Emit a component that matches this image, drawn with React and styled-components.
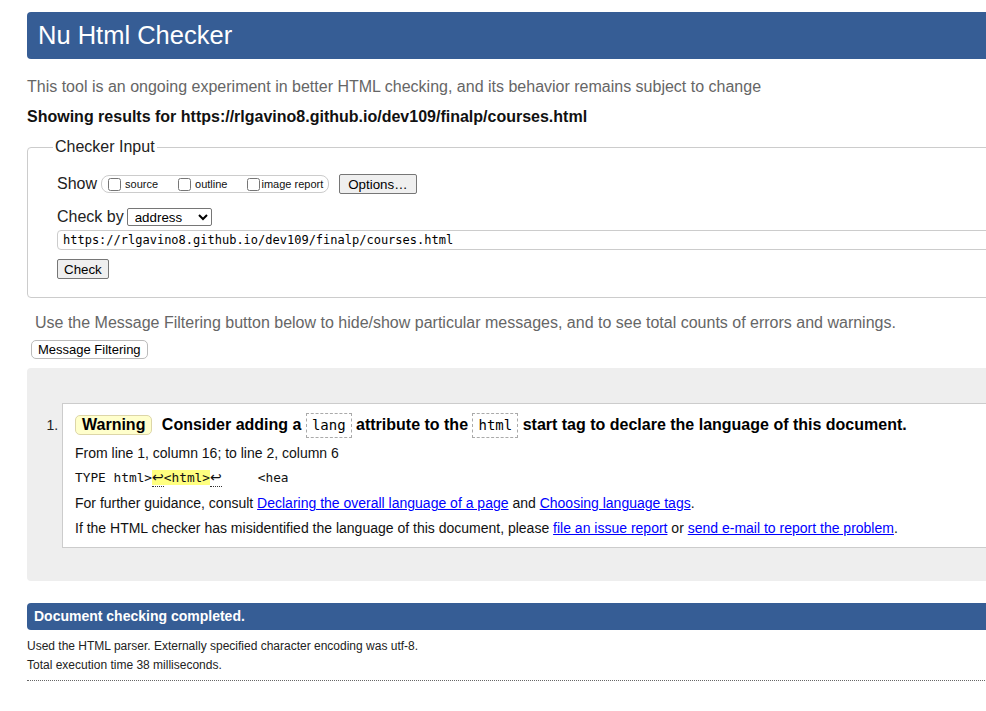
import React from 'react';
import styled, { createGlobalStyle } from 'styled-components';

const Global = createGlobalStyle`
  html, body { margin: 0; padding: 0; overflow: hidden; background: #fff; }
  body { font-family: "Liberation Sans", Arial, sans-serif; color: #000; }
`;

const Page = styled.div`
  width: 1060px;
  padding: 12px 0 0 27px;
  display: flex;
  flex-direction: column;
`;

const Header = styled.h1`
  margin: 0;
  height: 47px;
  background: #365d95;
  color: #fff;
  border-radius: 4px;
  font-size: 25.5px;
  font-weight: normal;
  line-height: 47px;
  padding-left: 11px;
`;

const Intro = styled.p`
  margin: ${p => p.$top}px 0 0 ${p => p.$left || 0}px;
  font-size: 16px;
  line-height: 20px;
  color: #666;
`;

const Results = styled.p`
  margin: 10px 0 0;
  font-size: 16px;
  line-height: 20px;
  font-weight: bold;
  color: #111;
`;

const Fieldset = styled.fieldset`
  margin: 10px 0 0;
  padding: 17px 0 18px 29px;
  border: 1px solid #ccc;
  border-radius: 4px;
  min-width: 0;
  display: flex;
  flex-direction: column;
`;

const Legend = styled.legend`
  font-size: 16px;
  line-height: 20px;
  padding: 0 2px;
  margin-left: -4px;
  color: #222;
`;

const Row = styled.div`
  display: flex;
  align-items: center;
  margin-top: ${p => p.$top || 0}px;
  font-size: 16px;
  color: #222;
`;

const OptGroup = styled.span`
  display: inline-flex;
  align-items: center;
  height: 16px;
  border: 1px solid #ccc;
  border-radius: 8px;
  padding: 0 5px 0 6px;
  margin: 0 10px 0 4px;
`;

const Opt = styled.label`
  display: inline-flex;
  align-items: center;
  font-size: 11px;
  margin-right: ${p => (p.$last ? 0 : 20)}px;
  color: #111;
`;

const Check = styled.input`
  width: 13px;
  height: 13px;
  margin: 0 ${p => p.$gap || 4}px 0 0;
`;

const Button = styled.button`
  font-family: "Liberation Sans", Arial, sans-serif;
  font-size: 13.33px;
  height: 20px;
  padding: 0 ${p => p.$pad || 6}px;
  background: #efefef;
  border: 1px solid #767676;
  border-radius: 2px;
  color: #000;
`;

const Select = styled.select`
  font-family: "Liberation Sans", Arial, sans-serif;
  font-size: 13.33px;
  width: 85px;
  height: 18px;
  margin-left: 3px;
  padding: 0 0 0 3px;
  border: 1px solid #767676;
  border-radius: 2px;
  background: #fff;
  color: #000;
`;

const UrlInput = styled.input`
  margin-top: 4px;
  height: 20px;
  box-sizing: border-box;
  border: 1px solid #ccc;
  border-radius: 4px;
  padding: 0 5px;
  font-family: "DejaVu Sans Mono", "Liberation Mono", monospace;
  font-size: 12px;
  color: #000;
  width: 1100px;
`;

const CheckRow = styled.div`
  margin-top: 9px;
`;

const FilterButton = styled.button`
  align-self: flex-start;
  margin: 7px 0 0 4px;
  height: 19px;
  padding: 0 6px;
  background: #fff;
  border: 1px solid #bbb;
  border-radius: 5px;
  font-family: "Liberation Sans", Arial, sans-serif;
  font-size: 13px;
  color: #000;
`;

const Results2 = styled.div`
  margin-top: 9px;
  background: #eee;
  border-radius: 4px;
  padding: 35px 0 33px;
`;

const List = styled.ol`
  margin: 0;
  padding: 0 0 0 35px;
  font-size: 14px;
  color: #222;
`;

const Item = styled.li`
  background: #fff;
  border: 1px solid #ccc;
  padding: 8px 0 9px 12px;
`;

const Heading = styled.p`
  margin: 0;
  font-size: 16px;
  line-height: 25px;
  font-weight: bold;
  color: #000;
`;

const Badge = styled.strong`
  display: inline-block;
  background: #ffffcc;
  border: 1px solid #ddd6a8;
  border-radius: 5px;
  padding: 0 6px;
  line-height: 18px;
  margin-right: 5px;
`;

const Code = styled.code`
  display: inline-block;
  border: 1px dashed #aaa;
  padding: 0 5px;
  line-height: 23px;
  font-family: "DejaVu Sans Mono", "Liberation Mono", monospace;
  font-size: 14px;
  font-weight: normal;
  vertical-align: middle;
`;

const Line = styled.p`
  margin: 5px 0 0;
  font-size: 14px;
  line-height: 20px;
  color: #111;
`;

const Extract = styled.p`
  margin: 5px 0 0;
  height: 20px;
  font-family: "DejaVu Sans Mono", "Liberation Mono", monospace;
  font-size: 12.8px;
  line-height: 20px;
  white-space: pre;
  color: #111;
`;

const Mark = styled.b`
  font-weight: normal;
  background: #ffff80;
`;

const Lf = styled.span`
  font-family: "DejaVu Sans", sans-serif;
  font-size: 14px;
  line-height: 0;
  border-bottom: 1px dotted #333;
  padding-bottom: 1px;
`;

const Gap = styled.span`
  display: inline-block;
  width: 36px;
`;

const Link = styled.a`
  color: #00f;
  text-decoration: underline;
`;

const DoneBar = styled.h2`
  margin: 22px 0 0;
  height: 27px;
  line-height: 27px;
  background: #365d95;
  color: #fff;
  border-radius: 4px;
  font-size: 14px;
  font-weight: bold;
  padding-left: 7px;
`;

const Foot = styled.p`
  margin: ${p => p.$top}px 0 0;
  font-size: 12px;
  line-height: 16px;
  color: #222;
`;

const Rule = styled.hr`
  margin: 7px 0 0;
  border: 0;
  border-top: 1px dotted #666;
  height: 0;
`;

export default function App() {
  return (
    <>
      <Global />
      <Page>
        <Header>Nu Html Checker</Header>
        <Intro $top={18}>This tool is an ongoing experiment in better HTML checking, and its behavior remains subject to change</Intro>
        <Results>Showing results for https://rlgavino8.github.io/dev109/finalp/courses.html</Results>
        <Fieldset>
          <Legend>Checker Input</Legend>
          <Row>
            Show
            <OptGroup>
              <Opt><Check type="checkbox" />source</Opt>
              <Opt><Check type="checkbox" />outline</Opt>
              <Opt $last><Check type="checkbox" $gap={1} />image report</Opt>
            </OptGroup>
            <Button $pad={8}>Options…</Button>
          </Row>
          <Row $top={14}>
            Check by
            <Select defaultValue="address">
              <option value="address">address</option>
              <option value="file">file upload</option>
              <option value="text">text input</option>
            </Select>
          </Row>
          <UrlInput readOnly value="https://rlgavino8.github.io/dev109/finalp/courses.html" />
          <CheckRow>
            <Button>Check</Button>
          </CheckRow>
        </Fieldset>
        <Intro $top={15} $left={8}>Use the Message Filtering button below to hide/show particular messages, and to see total counts of errors and warnings.</Intro>
        <FilterButton>Message Filtering</FilterButton>
        <Results2>
          <List>
            <Item>
              <Heading>
                <Badge>Warning</Badge> Consider adding a <Code>lang</Code> attribute to the <Code>html</Code> start tag to declare the language of this document.
              </Heading>
              <Line>From line 1, column 16; to line 2, column 6</Line>
              <Extract>TYPE html&gt;<Mark><Lf>↩</Lf>&lt;html&gt;</Mark><Lf>↩</Lf><Gap />&lt;hea</Extract>
              <Line>
                For further guidance, consult <Link href="#">Declaring the overall language of a page</Link> and <Link href="#">Choosing language tags</Link>.
              </Line>
              <Line>
                If the HTML checker has misidentified the language of this document, please <Link href="#">file an issue report</Link> or <Link href="#">send e-mail to report the problem</Link>.
              </Line>
            </Item>
          </List>
        </Results2>
        <DoneBar>Document checking completed.</DoneBar>
        <Foot $top={8}>Used the HTML parser. Externally specified character encoding was utf-8.</Foot>
        <Foot $top={3}>Total execution time 38 milliseconds.</Foot>
        <Rule />
      </Page>
    </>
  );
}
